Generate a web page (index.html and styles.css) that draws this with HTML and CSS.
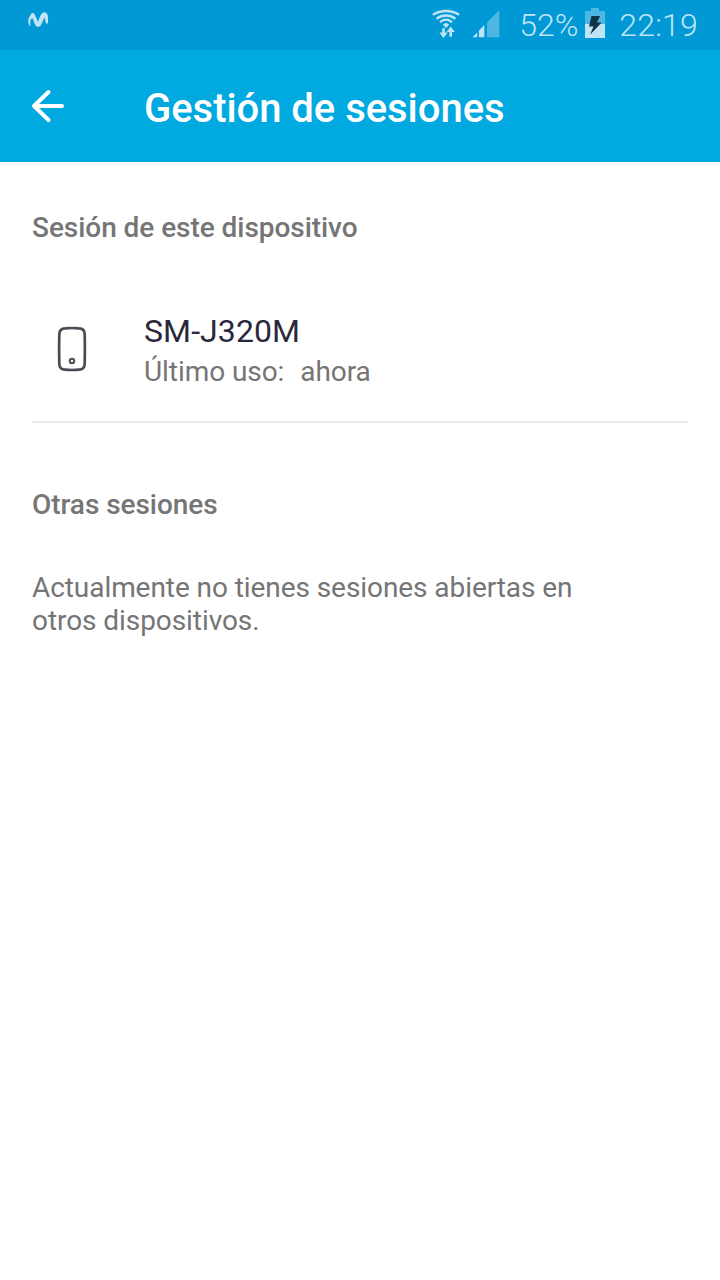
FILE: index.html
```html
<!DOCTYPE html>
<html lang="es">
<head>
<meta charset="utf-8">
<title>Gestión de sesiones</title>
<link rel="stylesheet" href="styles.css">
</head>
<body>
<div class="status">
  <svg class="carrier" width="22" height="18" viewBox="0 0 22 18"><path d="M2.500 14.800C.7 12 1 7 3 5.300C4 1.500 7 .8 8.200 4.500L11 11C12.500 6 14.500 1 17.500 1.200C21 1.200 21.500 7 21 12Q19.500 13.500 18.700 11.500L17.500 6.500C16 9 14.500 15.700 11.500 15.800C8 16 7.500 11.500 5.500 7.200C3 8 2.800 11 3.800 14.500Z" fill="#bfe5f4"/></svg>
  <div class="indicators">
    <svg class="wifi" width="28" height="30" viewBox="0 0 28 30">
      <g fill="none" stroke="#bfe5f4" stroke-width="2.400">
        <path d="M.9 5.800C8.500.7 19.500.7 27.100 5.800"/>
        <path d="M4.500 9.700C10 5.400 18 5.400 23.500 9.700"/>
        <path d="M8 13.200C11.700 9.900 16.300 9.900 20 13.200"/>
      </g>
      <path d="M10.800 15.700Q14 12.500 17.200 15.700L14 19Z" fill="#bfe5f4"/>
      <path d="M10.200 19.300h2.600v4.200h2.900L11.500 29 7.300 23.500h2.900ZM17.400 27.700H20v-4.700h2.900L18.700 17.500 14.500 23h2.900Z" fill="#bfe5f4"/>
    </svg>
    <svg class="signal" width="28" height="29" viewBox="0 0 28 29"><path d="M15 13.500L27.300 1V28.200H15Z" fill="#4db7e1"/><path d="M.5 28.200L5.200 23.500V28.200ZM7 21.500L12.300 16V28.200H7Z" fill="#bfe5f4"/></svg>
    <span class="percent">52%</span>
    <svg class="battery" width="20" height="30" viewBox="0 0 20 30"><path d="M6 0h8v3h6v13H0V3h6Z" fill="#4db7e1"/><path d="M0 16h20v14H0Z" fill="#bfe5f4"/><path d="M6.500 8H15L12 14.500H16.700L5 26.800 8.500 18.500H4Z" fill="#123446"/></svg>
    <span class="clock">22:19</span>
  </div>
</div>
<header class="toolbar">
  <svg class="back" width="34" height="34" viewBox="0 0 34 34"><path d="M17.500 3L3 17 17.500 31M3 17H31" fill="none" stroke="#fff" stroke-width="4" stroke-linecap="round" stroke-linejoin="round"/></svg>
  <h1 class="title">Gestión de sesiones</h1>
</header>
<main class="content">
  <h2 class="section">Sesión de este dispositivo</h2>
  <div class="session">
    <svg class="phone" width="30" height="46" viewBox="0 0 30 46"><g fill="none" stroke="#4b4b55"><path d="M8 2.300Q15 1.700 22 2.300Q27.500 2.500 27.700 8Q28.100 23 27.700 38Q27.500 43.500 22 43.700Q15 44.300 8 43.700Q2.500 43.500 2.300 38Q1.900 23 2.300 8Q2.500 2.500 8 2.300Z" stroke-width="2.700"/><circle cx="15" cy="35" r="2.200" stroke-width="2"/></g></svg>
    <div class="details">
      <div class="device">SM-J320M</div>
      <div class="usage"><span>Último uso:</span><span>ahora</span></div>
    </div>
  </div>
  <h2 class="section others">Otras sesiones</h2>
  <p class="empty">Actualmente no tienes sesiones abiertas en otros dispositivos.</p>
</main>
</body>
</html>
```
FILE: styles.css
```css
* { box-sizing: border-box; }
body {
  margin: 0;
  min-height: 1280px;
  background: #fff;
  font-family: Roboto, sans-serif;
  color: #757575;
}
svg { display: block; flex: none; }
.status {
  display: flex;
  justify-content: space-between;
  height: 50px;
  padding: 0 22px 0 27px;
  background: #0098d5;
}
.carrier { margin-top: 11px; }
.indicators {
  display: flex;
  color: #bfe5f4;
  font-size: 32px;
  font-weight: 300;
  line-height: 50px;
}
.wifi { margin-top: 9px; }
.signal { margin: 9px 19px 0 12px; }
.battery { margin: 8px 14px 0 7px; }
.clock { letter-spacing: 0.2px; }
.toolbar {
  display: flex;
  align-items: center;
  height: 112px;
  padding-left: 31px;
  background: #00a9e0;
}
.title {
  margin: 6px 0 0 79px;
  color: #fff;
  font-size: 40px;
  font-weight: 500;
  letter-spacing: -0.04px;
  line-height: 48px;
}
.content { padding: 49px 32px 0; }
.section {
  margin: 0;
  font-size: 28px;
  font-weight: 500;
  letter-spacing: -0.05px;
  line-height: 34px;
}
.session {
  display: flex;
  height: 178px;
  padding: 67px 0 0 25px;
  border-bottom: 2px solid #ebebeb;
}
.phone { margin-top: 14px; }
.details { margin-left: 57px; }
.device {
  color: #2b273c;
  font-size: 32px;
  letter-spacing: 0.1px;
  line-height: 38px;
}
.usage {
  display: flex;
  gap: 16px;
  margin-top: 5px;
  font-size: 28px;
  letter-spacing: -0.07px;
  line-height: 34px;
}
.others { margin-top: 65px; }
.empty {
  width: 590px;
  margin: 49px 0 0;
  font-size: 28px;
  letter-spacing: -0.07px;
  line-height: 33px;
}
```
